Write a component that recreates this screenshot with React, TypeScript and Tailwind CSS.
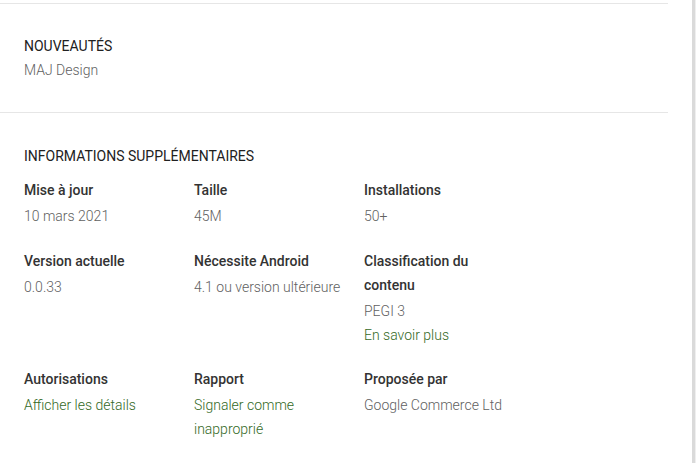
import React from 'react';

type Info = {
  label: string;
  values: { text: string; link?: boolean }[];
};

// Rows of the "informations supplémentaires" grid
const rows: Info[][] = [
  [
    { label: 'Mise à jour', values: [{ text: '10 mars 2021' }] },
    { label: 'Taille', values: [{ text: '45M' }] },
    { label: 'Installations', values: [{ text: '50+' }] },
  ],
  [
    { label: 'Version actuelle', values: [{ text: '0.0.33' }] },
    { label: 'Nécessite Android', values: [{ text: '4.1 ou version ultérieure' }] },
    {
      label: 'Classification du contenu',
      values: [{ text: 'PEGI 3' }, { text: 'En savoir plus', link: true }],
    },
  ],
  [
    { label: 'Autorisations', values: [{ text: 'Afficher les détails', link: true }] },
    { label: 'Rapport', values: [{ text: 'Signaler comme inapproprié', link: true }] },
    { label: 'Proposée par', values: [{ text: 'Google Commerce Ltd' }] },
  ],
];

const InfoItem: React.FC<{ item: Info }> = ({ item }) => (
  <div className="w-[170px] pr-[20px]">
    <div className="text-[14px] leading-[24px] font-medium text-[#333333]">{item.label}</div>
    <div className="mt-[2px]">
      {item.values.map((v) => (
        <div
          key={v.text}
          className={`text-[14px] leading-[24px] font-light ${
            v.link ? 'text-[#33691e]' : 'text-[#616161]'
          }`}
        >
          {v.text}
        </div>
      ))}
    </div>
  </div>
);

export default function App() {
  return (
    <div
      className="w-[696px] h-[463px] bg-white overflow-hidden flex"
      style={{ fontFamily: 'Roboto, "Liberation Sans", sans-serif' }}
    >
      <div className="w-[692px]">
        <div className="w-[668px] border-b border-[#e6e6e6] h-[4px]" />

        {/* Nouveautés */}
        <div className="w-[668px] border-b border-[#e6e6e6] pt-[30px] pb-[30px] px-[24px]">
          <h2 className="text-[14px] leading-[24px] text-[#212121]">NOUVEAUTÉS</h2>
          <p className="text-[14px] leading-[24px] font-light text-[#616161]">MAJ Design</p>
        </div>

        {/* Informations supplémentaires */}
        <div className="pt-[31px] px-[24px]">
          <h2 className="text-[14px] leading-[24px] text-[#212121] mb-[10px]">
            INFORMATIONS SUPPLÉMENTAIRES
          </h2>
          <div className="flex flex-col gap-[20px]">
            {rows.map((row, i) => (
              <div key={i} className={`flex ${i === 0 ? 'mb-[1px]' : ''}`}>
                {row.map((item) => (
                  <InfoItem key={item.label} item={item} />
                ))}
              </div>
            ))}
          </div>
        </div>
      </div>
      <div className="w-[3px] bg-[#dadada]" />
      <div className="w-[1px] bg-[#efefef]" />
    </div>
  );
}
